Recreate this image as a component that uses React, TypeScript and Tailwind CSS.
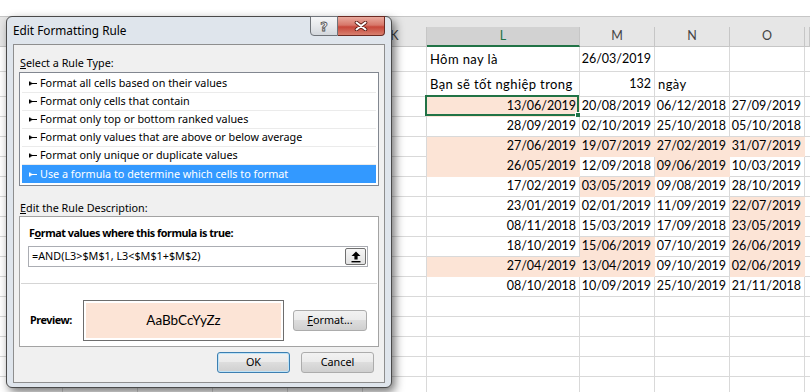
import React from 'react';

const colW = ['w-[63px]', 'w-[75px]', 'w-[75px]', 'w-[75px]', 'w-[75px]', 'w-[64px]', 'w-[153px]', 'w-[75px]', 'w-[75px]', 'w-[75px]', 'flex-1'];
const letters = ['', '', '', '', '', 'K', 'L', 'M', 'N', 'O', ''];

type Cell = { t?: string; r?: boolean; h?: boolean };

const dates: [string, boolean][][] = [
  [['13/06/2019', true], ['20/08/2019', false], ['06/12/2018', false], ['27/09/2019', false]],
  [['28/09/2019', false], ['02/10/2019', false], ['25/10/2018', false], ['05/10/2018', false]],
  [['27/06/2019', true], ['19/07/2019', true], ['27/02/2019', true], ['31/07/2019', true]],
  [['26/05/2019', true], ['12/09/2018', false], ['09/06/2019', true], ['10/03/2019', false]],
  [['17/02/2019', false], ['03/05/2019', true], ['09/08/2019', false], ['28/10/2019', false]],
  [['23/01/2019', false], ['02/01/2019', false], ['11/09/2019', false], ['22/07/2019', true]],
  [['08/11/2018', false], ['15/03/2019', false], ['17/09/2018', false], ['23/05/2019', true]],
  [['18/10/2019', false], ['15/06/2019', true], ['07/10/2019', false], ['26/06/2019', true]],
  [['27/04/2019', true], ['13/04/2019', true], ['09/10/2019', false], ['02/06/2019', true]],
  [['08/10/2018', false], ['10/09/2019', false], ['25/10/2019', false], ['21/11/2018', false]],
];

function buildRows(): { h: string; cells: Cell[] }[] {
  const rows: { h: string; cells: Cell[] }[] = [];
  const empty = (): Cell[] => Array.from({ length: 11 }, () => ({}));
  const r1 = empty();
  r1[6] = { t: 'Hôm nay là' };
  r1[7] = { t: '26/03/2019', r: true };
  rows.push({ h: 'h-[25px]', cells: r1 });
  const r2 = empty();
  r2[6] = { t: 'Bạn sẽ tốt nghiệp trong' };
  r2[7] = { t: '132', r: true };
  r2[8] = { t: 'ngày' };
  rows.push({ h: 'h-[25px]', cells: r2 });
  dates.forEach((d) => {
    const c = empty();
    d.forEach(([t, h], i) => {
      c[6 + i] = { t, r: true, h };
    });
    rows.push({ h: 'h-[20px]', cells: c });
  });
  for (let i = 0; i < 6; i++) rows.push({ h: 'h-[20px]', cells: empty() });
  return rows;
}

function Sheet() {
  const rows = buildRows();
  return (
    <div className="flex flex-col font-['Lato',sans-serif] text-[12.5px] text-black">
      <div className="h-[17px] border-b border-[#c6c6c6] bg-white" />
      <div className="h-[10px] bg-[#e6e6e6]" />
      <div className="flex h-[20px]">
        {letters.map((l, i) =>
          l === 'L' ? (
            <div key={i} className={`${colW[i]} shrink-0 h-full flex items-center justify-center bg-[#d2d2d2] border-r border-[#c6c6c6] border-b-2 border-b-[#217346] text-[#217346]`}>
              {l}
            </div>
          ) : (
            <div key={i} className={`${colW[i]} shrink-0 h-full flex items-center justify-center bg-[#e6e6e6] border-r border-b border-[#c6c6c6] text-[#444]`}>
              {l}
            </div>
          )
        )}
      </div>
      {rows.map((row, ri) => (
        <div key={ri} className={`flex ${row.h}`}>
          {row.cells.map((c, ci) => (
            <div
              key={ci}
              className={`${colW[ci]} shrink-0 h-full relative flex px-[3px] whitespace-nowrap border-r border-b ${
                c.h ? 'bg-[#fce4d6] border-[#fce4d6]' : 'bg-white border-[#d9d9d9]'
              } ${c.r ? 'justify-end items-center' : 'justify-start items-center pt-[2px] text-[13px] tracking-[0.4px]'}`}
            >
              {c.t}
              {ri === 2 && ci === 6 && (
                <div className="absolute -left-[2px] -top-[2px] right-0 bottom-0 border-2 border-[#217346]">
                  <div className="absolute -right-[4px] -bottom-[4px] w-[6px] h-[6px] bg-[#217346] border border-white" />
                </div>
              )}
            </div>
          ))}
        </div>
      ))}
    </div>
  );
}

function RuleIcon() {
  return (
    <svg width="8" height="5" viewBox="0 0 8 5" className="shrink-0">
      <path d="M0 0.5h1.4v4H0z M1.4 1.2 L3.6 2 H8 V3 H3.6 L1.4 3.8z" fill="currentColor" />
    </svg>
  );
}

const ruleTypes = [
  'Format all cells based on their values',
  'Format only cells that contain',
  'Format only top or bottom ranked values',
  'Format only values that are above or below average',
  'Format only unique or duplicate values',
  'Use a formula to determine which cells to format',
];

const btn =
  'rounded-[3px] border bg-[linear-gradient(#f2f2f2,#ebebeb_45%,#dddddd_50%,#cfcfcf)] flex items-center justify-center text-black';

function Dialog() {
  return (
    <div className="absolute left-[6px] top-[16px] w-[386px] h-[372px] rounded-[6px] border border-[#4a4a4a] bg-[#dfe5ec] shadow-[3px_4px_10px_rgba(0,0,0,0.55)] flex flex-col font-['Noto_Sans',sans-serif] text-[10.8px] text-black">
      <div className="h-[27px] flex justify-between shrink-0">
        <div className="pl-[6px] self-center text-[11.8px] leading-none">Edit Formatting Rule</div>
        <div className="flex -mt-[1px] mr-[6px] h-[20px]">
          <div className="w-[28px] h-full rounded-bl-[4px] border border-[#6f7379] bg-[linear-gradient(#f5f6f7,#e6e8eb_50%,#d3d7dc)] flex items-center justify-center text-[13px] font-bold text-[#f8f8f8] [-webkit-text-stroke:0.8px_#505050] leading-none font-['DejaVu_Sans',sans-serif]">
            ?
          </div>
          <div className="w-[47px] h-full rounded-br-[4px] border border-l-0 border-[#6b2a22] bg-[linear-gradient(#e9aa9e,#d7776a_45%,#c7473a_55%,#d8806f)] flex items-center justify-center">
            <svg width="14" height="10" viewBox="0 0 14 10">
              <path d="M2.5 1.5 L11.5 8.5 M11.5 1.5 L2.5 8.5" stroke="#5a1d15" strokeWidth="3.6" strokeLinecap="round" />
              <path d="M2.5 1.5 L11.5 8.5 M11.5 1.5 L2.5 8.5" stroke="#ffffff" strokeWidth="2" strokeLinecap="round" />
            </svg>
          </div>
        </div>
      </div>
      <div className="mx-[6px] mb-[4px] flex-1 border border-[#8e8e8e] bg-[#f0f0f0] px-[5px] flex flex-col">
        <div className="h-[27px] pt-[10px] leading-[16px] pl-[1px]">
          <span className="underline">S</span>elect a Rule Type:
        </div>
        <div className="h-[114px] w-[360px] border border-[#828790] bg-white pt-[2px] px-[2px] flex flex-col">
          {ruleTypes.map((t, i) =>
            i === 5 ? (
              <div key={t} className="h-[18px] flex items-center bg-[#3399ff] text-white pl-[7px] gap-[3px]">
                <RuleIcon />
                <span>{t}</span>
              </div>
            ) : (
              <div key={t} className="h-[18px] flex items-center border-b border-[#ebebeb] pl-[7px] gap-[3px]">
                <RuleIcon />
                <span>{t}</span>
              </div>
            )
          )}
        </div>
        <div className="h-[30px] pt-[14px] leading-[16px] pl-[1px]">
          <span className="underline">E</span>dit the Rule Description:
        </div>
        <div className="h-[131px] w-[360px] border border-[#a3a3a3] bg-white flex flex-col">
          <div className="pl-[9px] pt-[8px] leading-[16px] font-bold tracking-[-0.45px]">
            F<span className="underline">o</span>rmat values where this formula is true:
          </div>
          <div className="mt-[5px] ml-[8px] w-[340px] h-[21px] border border-[#abadb3] bg-white flex items-center justify-between pl-[3px]">
            <span>=AND(L3&gt;$M$1, L3&lt;$M$1+$M$2)</span>
            <div className="mr-[1px] w-[21px] h-[17px] rounded-[2px] border border-[#707070] bg-[linear-gradient(#f6f6f6,#e2e2e2)] flex items-center justify-center">
              <svg width="10" height="12" viewBox="0 0 10 12">
                <path d="M5 0.5 L9.5 5 H6.6 V8.5 H3.4 V5 H0.5z" fill="#000" />
                <rect x="0.5" y="10" width="9" height="1.4" fill="#000" />
              </svg>
            </div>
          </div>
          <div className="mt-[16px] mx-[1px] h-px bg-[#d5d5d5]" />
          <div className="mt-[16px] flex items-center">
            <div className="w-[63px] pl-[10px] font-bold tracking-[-0.45px]">Preview:</div>
            <div className="w-[201px] h-[41px] border border-[#6d6d6d] bg-white p-[2px]">
              <div className="w-full h-full bg-[#fce4d6] flex items-center justify-center font-['Lato',sans-serif] text-[13.5px]">
                AaBbCcYyZz
              </div>
            </div>
            <div className={`ml-[9px] w-[74px] h-[21px] border-[#acacac] ${btn}`}>
              <span className="underline">F</span>ormat...
            </div>
          </div>
        </div>
        <div className="mt-[5px] mr-[5px] flex justify-end gap-[11px]">
          <div className={`w-[73px] h-[21px] border-[#3c7fb1] shadow-[inset_0_0_0_1px_#bfe3f7] ${btn} bg-[linear-gradient(#eaf6fd,#d9f0fc_45%,#bee6fd_50%,#a7d9f5)]`}>OK</div>
          <div className={`w-[73px] h-[21px] border-[#acacac] ${btn}`}>Cancel</div>
        </div>
      </div>
    </div>
  );
}

export default function App() {
  return (
    <div className="relative w-[810px] h-[392px] overflow-hidden bg-white">
      <Sheet />
      <Dialog />
    </div>
  );
}
